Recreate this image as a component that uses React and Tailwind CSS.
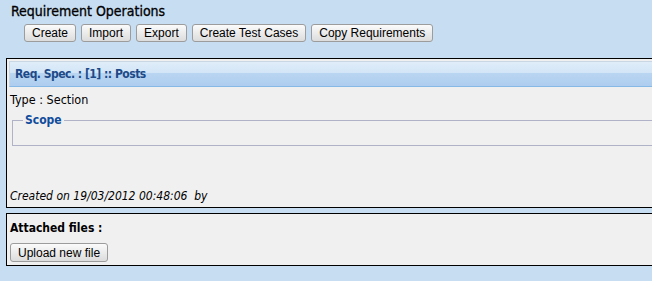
import React from 'react';

const btn =
  "h-[18px] px-[7px] border border-[#9c9c9c] rounded-[3px] bg-gradient-to-b from-[#fbfbfb] to-[#dcdcdc] text-[12px] leading-[16px] text-black font-['Liberation_Sans',Arial,sans-serif]";

const App = () => {
  const ops = ['Create', 'Import', 'Export', 'Create Test Cases', 'Copy Requirements'];

  return (
    <div className="w-full h-[281px] overflow-hidden bg-[#c7ddf1] font-['DejaVu_Sans_Condensed','DejaVu_Sans',sans-serif] text-[12px] text-black">
      <div className="pl-[11px] pt-[2px] h-[24px] text-[14px] leading-[18px] [-webkit-text-stroke:0.3px_black]">Requirement Operations</div>

      <div className="flex gap-[5px] pl-[24px]">
        {ops.map((o) => (
          <button key={o} className={btn}>
            {o}
          </button>
        ))}
      </div>

      <div className="ml-[6px] mt-[16px] w-[660px] h-[150px] border border-black bg-[#f0f0f0] p-[2px] flex flex-col">
        <div className="h-[26px] border border-[#c9d6e3] border-b-[#86b9e6] flex flex-col">
          <div className="h-[11px] bg-gradient-to-b from-[#e0edf9] to-[#d2e5f7]" />
          <div className="flex-1 bg-gradient-to-b from-[#b9d5f1] to-[#aecdef]" />
        </div>
        <div className="-mt-[21px] h-[21px] pl-[6px] font-bold text-[12px] tracking-[-0.5px] text-[#1d4a88] leading-[16px] relative">
          Req. Spec. : [1] :: Posts
        </div>
        <div className="pl-[1px] mt-[5px] leading-[16px] text-[12.5px]">Type : Section</div>
        <fieldset className="ml-[3px] mt-[5px] h-[33px] border border-[#b0b3c8] px-[10px]">
          <legend className="px-[2px] font-bold text-[#0f4c9c] leading-[14px]">Scope</legend>
        </fieldset>
        <div className="mt-auto mb-[1px] pl-[1px] italic leading-[16px]">Created on 19/03/2012 00:48:06&nbsp;&nbsp;by</div>
      </div>

      <div className="ml-[6px] mt-[5px] w-[660px] h-[53px] border border-black bg-[#f0f0f0] px-[3px] pt-[6px]">
        <div className="font-bold leading-[16px]">Attached files :</div>
        <button className={btn + ' mt-[7px] h-[19px] px-[6px]'}>Upload new file</button>
      </div>
    </div>
  );
};

export default App;
